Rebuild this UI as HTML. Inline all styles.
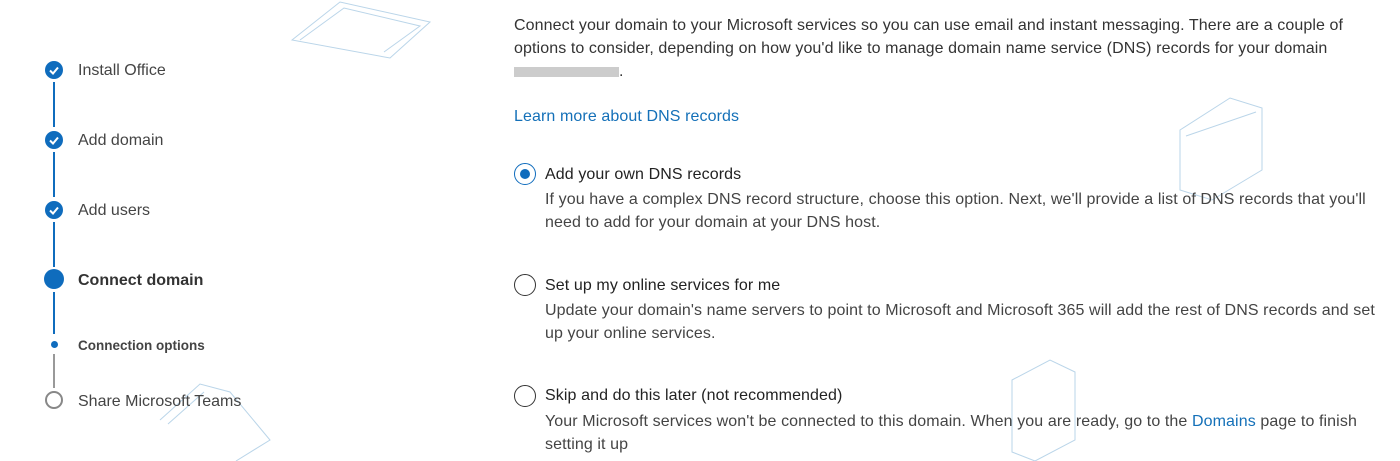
<!DOCTYPE html>
<html><head><style>
body{margin:0;width:1400px;height:461px;background:#fff;font-family:"Liberation Sans",Arial,sans-serif;color:#323130;position:relative;overflow:hidden}
.a{position:absolute;white-space:nowrap}
.t{font-size:16px;letter-spacing:0.1px}
.s{font-size:16px;color:#444}
.ck{position:absolute;left:45px;width:18px;height:18px;border-radius:50%;background:#0f6cbd}
.ln{position:absolute;left:53px;width:2px;background:#0f6cbd}
.rad{position:absolute;left:514px;width:22px;height:22px;border-radius:50%;border:1.5px solid #333;box-sizing:border-box;background:#fff}
.lk{color:#1470b8}
.h{color:#222}
</style></head><body>
<svg class="a" style="left:0;top:0" width="1400" height="461">
<g fill="none" stroke="#9cc3e0" stroke-width="1" opacity=".7">
<path d="M292 40 L340 2 L430 22 L390 58 Z M300 40 L344 8 L420 26 L384 52"/>
<path d="M1180 130 L1230 98 L1262 108 L1262 170 L1212 200 L1180 190 Z M1186 136 L1256 112"/>
<path d="M1012 380 L1050 360 L1075 372 L1075 440 L1035 461 L1012 452 Z"/>
<path d="M160 420 L200 384 L230 392 L270 440 L236 461 M168 424 L204 392"/>
</g></svg>
<div class="ck" style="top:61px"></div>
<div class="ck" style="top:131px"></div>
<div class="ck" style="top:201px"></div>
<svg class="a" style="left:45px;top:61px" width="18" height="160"><g fill="none" stroke="#fff" stroke-width="2"><path d="M5 9.5l3 3 5-6"/><path d="M5 79.5l3 3 5-6"/><path d="M5 149.5l3 3 5-6"/></g></svg>
<div class="ln" style="top:82px;height:45px"></div>
<div class="ln" style="top:152px;height:45px"></div>
<div class="ln" style="top:222px;height:45px"></div>
<div class="a" style="left:44px;top:269px;width:20px;height:20px;border-radius:50%;background:#0f6cbd"></div>
<div class="ln" style="top:292px;height:42px"></div>
<div class="a" style="left:51px;top:341px;width:7px;height:7px;border-radius:50%;background:#0f6cbd"></div>
<div class="a" style="left:53px;top:354px;width:2px;height:34px;background:#999"></div>
<div class="a" style="left:45px;top:391px;width:18px;height:18px;border-radius:50%;border:2px solid #888;box-sizing:border-box"></div>
<div class="a s" style="left:78px;top:62px">Install Office</div>
<div class="a s" style="left:78px;top:132px">Add domain</div>
<div class="a s" style="left:78px;top:202px">Add users</div>
<div class="a s" style="left:78px;top:272px;font-weight:bold;color:#333">Connect domain</div>
<div class="a" style="left:78px;top:338px;font-size:13.5px;font-weight:bold;color:#444">Connection options</div>
<div class="a s" style="left:78px;top:393px">Share Microsoft Teams</div>

<div class="a t" style="left:514px;top:14px;line-height:23px;color:#333">Connect your domain to your Microsoft services so you can use email and instant messaging. There are a couple of<br>options to consider, depending on how you'd like to manage domain name service (DNS) records for your domain<br><span style="display:inline-block;width:105px;height:10px;background:#ccc;vertical-align:middle"></span>.</div>
<div class="a t lk" style="left:514px;top:108px">Learn more about DNS records</div>

<div class="rad" style="top:163px;border-color:#0f6cbd"></div>
<div class="a" style="left:520px;top:169px;width:10px;height:10px;border-radius:50%;background:#0f6cbd"></div>
<div class="a t h" style="left:545px;top:166px">Add your own DNS records</div>
<div class="a t" style="left:545px;top:188px;line-height:23px;color:#444">If you have a complex DNS record structure, choose this option. Next, we'll provide a list of DNS records that you'll<br>need to add for your domain at your DNS host.</div>

<div class="rad" style="top:274px"></div>
<div class="a t h" style="left:545px;top:277px">Set up my online services for me</div>
<div class="a t" style="left:545px;top:299px;line-height:23px;color:#444">Update your domain's name servers to point to Microsoft and Microsoft 365 will add the rest of DNS records and set<br>up your online services.</div>

<div class="rad" style="top:385px"></div>
<div class="a t h" style="left:545px;top:387px">Skip and do this later (not recommended)</div>
<div class="a t" style="left:545px;top:410px;line-height:23px;color:#444">Your Microsoft services won't be connected to this domain. When you are ready, go to the <span class="lk">Domains</span> page to finish<br>setting it up</div>
</body></html>
